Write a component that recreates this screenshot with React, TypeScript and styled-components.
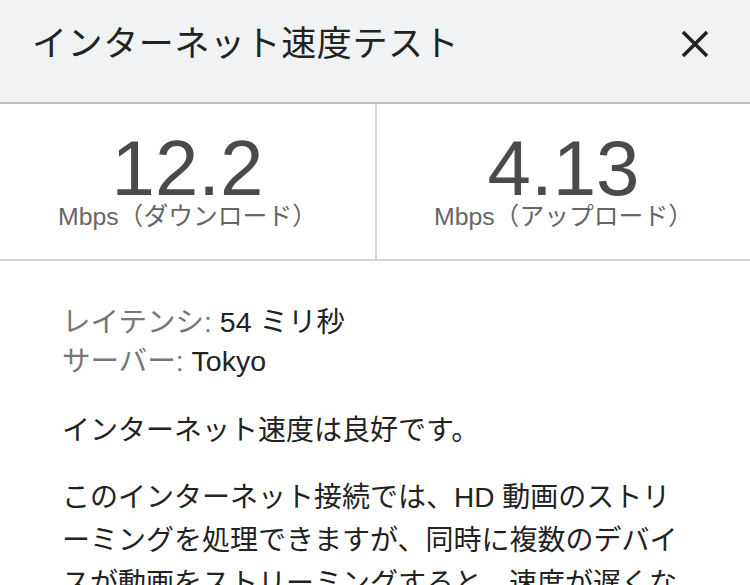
import styled, { createGlobalStyle } from "styled-components";

const GlobalStyle = createGlobalStyle`
  html, body {
    margin: 0;
    padding: 0;
    background: #ffffff;
  }
  body {
    font-family: "Liberation Sans", "Noto Sans CJK JP", sans-serif;
    -webkit-font-smoothing: antialiased;
  }
`;

const stats = [
  { value: "12.2", label: "Mbps（ダウンロード）" },
  { value: "4.13", label: "Mbps（アップロード）" },
];

export default function App() {
  return (
    <Page>
      <GlobalStyle />
      <Header>
        <Title>インターネット速度テスト</Title>
        <CloseButton aria-label="閉じる">
          <svg width="30" height="30" viewBox="0 0 30 30">
            <path
              d="M3 3 L27 27 M27 3 L3 27"
              stroke="#222"
              strokeWidth="3.6"
              fill="none"
            />
          </svg>
        </CloseButton>
      </Header>

      <StatsRow>
        {stats.map((s) => (
          <Stat key={s.label}>
            <Value>{s.value}</Value>
            <Unit>{s.label}</Unit>
          </Stat>
        ))}
      </StatsRow>

      <Body>
        <div>
          <DetailLine>
            <Key>レイテンシ:</Key> <Val>54 ミリ秒</Val>
          </DetailLine>
          <DetailLine>
            <Key>サーバー:</Key> <Val>Tokyo</Val>
          </DetailLine>
        </div>
        <Summary>インターネット速度は良好です。</Summary>
        <Paragraph>
          このインターネット接続では、HD
          動画のストリーミングを処理できますが、同時に複数のデバイスが動画をストリーミングすると、速度が遅くなる場合があります。
        </Paragraph>
      </Body>
    </Page>
  );
}

const Page = styled.div`
  width: 750px;
  height: 585px;
  overflow: hidden;
  background: #ffffff;
`;

const Header = styled.header`
  height: 104px;
  box-sizing: border-box;
  padding: 22px 40px 0 32px;
  display: flex;
  align-items: flex-start;
  justify-content: space-between;
  background: #f1f2f4;
  border-bottom: 2px solid #bdbdbd;
`;

const Title = styled.h1`
  margin: 0;
  font-size: 35px;
  font-weight: 400;
  line-height: 44px;
  color: #222222;
  letter-spacing: 0.6px;
`;

const CloseButton = styled.button`
  border: none;
  background: none;
  padding: 0;
  margin-top: 7px;
  width: 30px;
  height: 30px;
  display: flex;
  cursor: pointer;
`;

const StatsRow = styled.section`
  display: grid;
  grid-template-columns: 1fr 1fr;
  border-bottom: 2px solid #d6d6d6;
`;

const Stat = styled.div`
  height: 155px;
  box-sizing: border-box;
  padding-top: 29px;
  display: flex;
  flex-direction: column;
  align-items: center;
  & + & {
    border-left: 2px solid #d6d6d6;
  }
`;

const Value = styled.div`
  font-size: 78px;
  line-height: 70px;
  color: #4a4a4a;
`;

const Unit = styled.div`
  font-size: 24.8px;
  line-height: 28px;
  color: #666666;
`;

const Body = styled.main`
  padding: 42px 58px 0 62px;
  font-size: 28px;
  color: #222222;
`;

const DetailLine = styled.div`
  line-height: 39px;
  font-size: 28.5px;
`;

const Key = styled.span`
  color: #777777;
`;

const Val = styled.span`
  color: #222222;
`;

const Summary = styled.p`
  margin: 30px 0 0;
  line-height: 40px;
`;

const Paragraph = styled.p`
  margin: 25px 0 0;
  line-height: 43px;
  line-break: anywhere;
  word-break: break-all;
`;
